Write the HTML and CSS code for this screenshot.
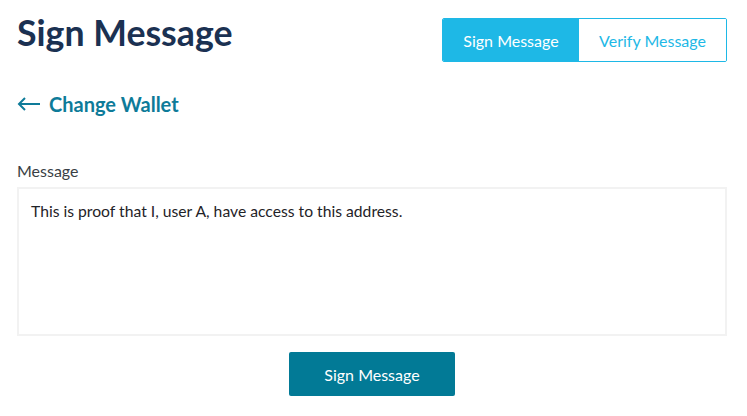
FILE: index.html
```html
<!DOCTYPE html>
<html>
<head>
<meta charset="utf-8">
<link rel="stylesheet" href="styles.css">
</head>
<body>
<div class="page">
  <div class="header">
    <h1 class="title">Sign Message</h1>
    <div class="toggle">
      <button class="tab active">Sign Message</button>
      <button class="tab">Verify Message</button>
    </div>
  </div>
  <a class="back" href="#">
    <svg class="arrow" width="24" height="14" viewBox="0 0 24 14"><path d="M23 7H2M8 1L2 7l6 6" fill="none" stroke="currentColor" stroke-width="2"/></svg>
    <span>Change Wallet</span>
  </a>
  <label class="label">Message</label>
  <div class="textarea">This is proof that I, user A, have access to this address.</div>
  <div class="actions">
    <button class="primary">Sign Message</button>
  </div>
</div>
</body>
</html>
```
FILE: styles.css
```css
* { box-sizing: border-box; }
html, body { margin: 0; background: #fff; }
body { font-family: Lato, "Open Sans", sans-serif; }
.page { padding: 0 20px 0 17px; }
.header { display: flex; justify-content: space-between; align-items: flex-start; padding-top: 12px; }
.title { margin: 0; font-size: 35.7px; font-weight: 700; color: #1b3152; line-height: 42px; }
.toggle { display: flex; margin-top: 6px; border: 1px solid #1eb8e6; border-radius: 2px; overflow: hidden; }
.tab { font-family: inherit; font-size: 16px; height: 42px; border: 0; background: #fff; color: #1eb8e6; padding: 0; cursor: pointer; }
.tab.active { background: #1eb8e6; color: #fff; width: 136px; }
.tab:not(.active) { width: 147px; }
.back { display: flex; align-items: center; gap: 8px; margin-top: 30px; color: #0e7b99; text-decoration: none; font-weight: 700; font-size: 20px; line-height: 24px; }
.arrow { display: block; }
.label { display: block; margin-top: 45px; font-size: 16px; color: #3a3f45; line-height: 20px; }
.textarea { margin-top: 6px; height: 149px; border: 2px solid #f2f2f2; padding: 12px 12px; font-size: 15.7px; color: #1f2328; line-height: 20px; }
.actions { display: flex; justify-content: center; margin-top: 16px; }
.primary { font-family: inherit; font-size: 16px; color: #fff; background: #027a96; border: 0; border-radius: 2px; width: 166px; height: 44px; }
```
